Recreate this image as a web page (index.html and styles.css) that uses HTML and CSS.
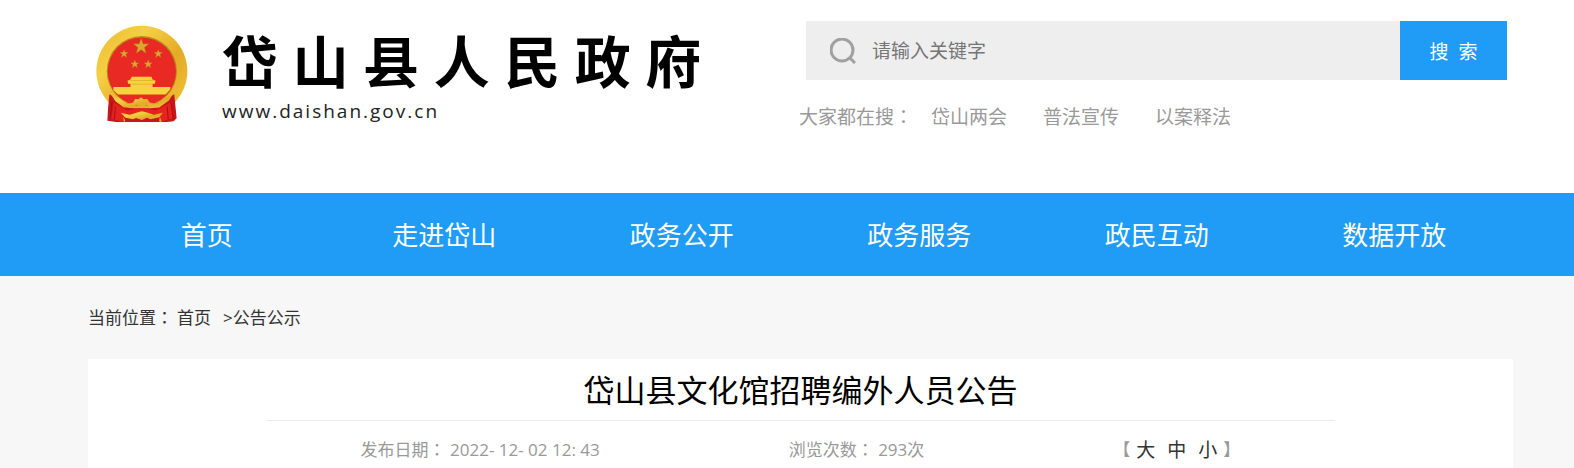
FILE: index.html
```html
<!DOCTYPE html>
<html lang="zh-CN">
<head>
  <meta charset="UTF-8">
  <meta name="viewport" content="width=device-width, initial-scale=1.0">
  <title>岱山县文化馆招聘编外人员公告</title>
  <link rel="stylesheet" href="styles.css">
</head>
<body>

  <header class="header">
    <a class="logo" href="#">
      <svg class="emblem" viewBox="50 43 275 293" aria-hidden="true">
        <defs>
          <linearGradient id="gold" x1="0" y1="0" x2="1" y2="1">
            <stop offset="0" stop-color="#e9b92f"/>
            <stop offset="0.3" stop-color="#f6cf45"/>
            <stop offset="0.6" stop-color="#e3ab26"/>
            <stop offset="1" stop-color="#f3c63a"/>
          </linearGradient>
          <path id="star" d="M0-25 6-8 24-8 10 3 15 21 0 10-15 21-10 3-24-8-6-8Z"/>
        </defs>
        <circle cx="187" cy="181" r="136" fill="url(#gold)"/>
        <circle cx="187" cy="181" r="105" fill="#b98a1c"/>
        <circle cx="187" cy="182" r="102" fill="#e92a24"/>
        <g fill="#d9a62e" stroke="#a8581a" stroke-width="1">
          <use href="#star" transform="translate(185 107)"/>
          <use href="#star" transform="translate(134 129) scale(.55)"/>
          <use href="#star" transform="translate(236 129) scale(.55)"/>
          <use href="#star" transform="translate(166 160) scale(.55)"/>
          <use href="#star" transform="translate(206 160) scale(.55)"/>
        </g>
        <!-- gate tower -->
        <path fill="#f7d33f" d="M157 198H216L219 206 228 210 226 219H219V228H272V236L258 251H116L102 238V228H153V219H146L144 210 153 206Z"/>
        <path stroke="#d9a62e" stroke-width="2" d="M150 209H223M153 220H219"/>
        <!-- ribbon and gear -->
        <path fill="#c8171c" d="M90 250 144 279 160 292H214L230 279 284 250 291 322 282 331 262 333H110L84 329 86 292Z"/>
        <path fill="url(#gold)" d="M95 251 118 261 144 279 161 275 167 264 178 265 184 259 192 265 203 264 211 275 230 279 255 263 281 248 268 269 239 290 213 292 203 282 187 289 169 282 157 292 132 289 108 271Z"/>
        <path fill="#e5231f" d="M104 276 143 299 184 291 229 299 273 275 280 321 243 333 237 311 187 303 138 311 131 332 95 323Z"/>
        <path fill="url(#gold)" d="M124 305 151 311 175 304 187 301 200 304 224 311 250 305 239 319 213 325 202 320 187 327 170 321 160 325 138 320ZM132 317 138 331 133 333ZM241 317 246 333 239 331Z"/>
        <path fill="none" stroke="#a90f16" stroke-width="3" d="M98 272 92 324M108 286 105 325M274 275 281 324M263 287 266 326"/>
      </svg>
      <span class="logo-text">
        <strong class="site-name">岱 山 县 人 民 政 府</strong>
        <span class="site-url">www.daishan.gov.cn</span>
      </span>
    </a>

    <div class="search">
      <form class="search-form">
        <label class="search-field">
          <svg class="search-icon" viewBox="0 0 26 26" aria-hidden="true">
            <circle cx="12" cy="12" r="11"/>
            <path d="M19 19 25 25"/>
          </svg>
          <input type="text" placeholder="请输入关键字" aria-label="请输入关键字">
        </label>
        <button type="button">搜&nbsp; 索</button>
      </form>
      <div class="hot-words">
        <span class="hot-label">大家都在搜<span class="colon" lang="zh-TW">：</span></span>
        <a href="#">岱山两会</a>
        <a href="#">普法宣传</a>
        <a href="#">以案释法</a>
      </div>
    </div>
  </header>

  <nav class="nav">
    <a href="#">首页</a>
    <a href="#">走进岱山</a>
    <a href="#">政务公开</a>
    <a href="#">政务服务</a>
    <a href="#">政民互动</a>
    <a href="#">数据开放</a>
  </nav>

  <main class="main">
    <div class="breadcrumb">
      <span>当前位置<span class="colon" lang="zh-TW">：</span></span>
      <a class="crumb-home" href="#">首页</a>
      <span>&gt;<a href="#">公告公示</a></span>
    </div>

    <article class="article">
      <h1>岱山县文化馆招聘编外人员公告</h1>
      <div class="meta">
        <span>发布日期<span class="colon" lang="zh-TW">：</span> 2022- 12- 02 12: 43</span>
        <span>浏览次数<span class="colon" lang="zh-TW">：</span> 293次</span>
        <span class="font-size">【<button type="button">大</button><button type="button">中</button><button type="button">小</button>】</span>
      </div>
    </article>
  </main>

</body>
</html>
```
FILE: styles.css
```css
* { margin: 0; padding: 0; box-sizing: border-box; }
body {
  font-family: "Open Sans", "Noto Sans CJK SC", sans-serif;
  background: #f7f7f7;
  color: #333;
}
a { color: inherit; text-decoration: none; }
button, input { font: inherit; border: none; background: none; }
button { cursor: pointer; }
.colon { font-family: "Noto Sans CJK TC", sans-serif; line-height: 1; }

/* Header */
.header {
  display: flex;
  justify-content: space-between;
  align-items: flex-start;
  min-height: 193px;
  padding: 21px 67px 0 96px;
  background: #fff;
}
.logo {
  display: flex;
  gap: 34px;
  padding-top: 4px;
  color: #000;
}
.emblem { width: 92px; height: 98px; }
.logo-text { display: flex; flex-direction: column; }
.site-name {
  font-size: 56px;
  font-weight: 700;
  line-height: 72px;
  white-space: nowrap;
}
.site-url {
  font-size: 19px;
  line-height: 28px;
  letter-spacing: 2px;
  color: #222;
}

/* Search */
.search { width: 708px; font-size: 19px; }
.search-form {
  display: flex;
  height: 59px;
  margin-left: 7px;
}
.search-field {
  flex: 1;
  display: flex;
  align-items: center;
  gap: 16px;
  padding-left: 24px;
  background: #eee;
}
.search-icon {
  width: 26px;
  height: 26px;
  fill: none;
  stroke: #a0a0a0;
  stroke-width: 3;
}
.search-field input { flex: 1; outline: none; }
.search-field input::placeholder { color: #757575; }
.search-form button {
  width: 107px;
  background: #209cf7;
  color: #fff;
}
.hot-words {
  display: flex;
  gap: 36px;
  padding-top: 23px;
  line-height: 28px;
  color: #999;
}
.hot-label { margin-right: -18px; }

/* Navigation */
.nav {
  display: grid;
  grid-template-columns: repeat(6, 1fr);
  padding: 2px 61px 0 88px;
  background: #209cf7;
  color: #fff;
  font-size: 26px;
  line-height: 81px;
  text-align: center;
}

/* Content */
.main { padding: 0 61px 0 88px; }
.breadcrumb {
  display: flex;
  font-size: 17px;
  line-height: 83px;
}
.crumb-home { margin: 0 12px 0 4px; }
.article { background: #fff; }
.article h1 {
  width: 75%;
  margin: 0 auto;
  padding-top: 2px;
  border-bottom: 1px solid #eaeaea;
  font-size: 31px;
  font-weight: 400;
  line-height: 59px;
  text-align: center;
  color: #000;
}
.meta {
  display: flex;
  justify-content: space-around;
  width: 75%;
  margin: 0 auto;
  font-size: 17px;
  line-height: 58px;
  color: #999;
}
.font-size { display: flex; }
.font-size button {
  padding: 0 6px;
  font-size: 19px;
  color: #333;
}
```
